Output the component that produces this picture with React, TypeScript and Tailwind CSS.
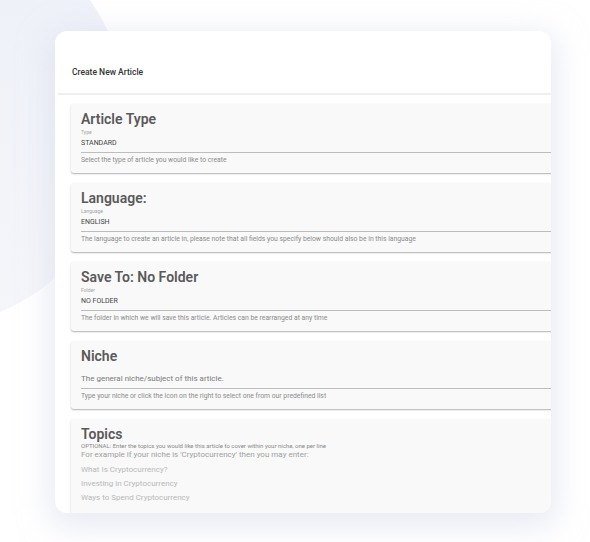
import React from 'react';

const SelectPanel: React.FC<{ title: string; label: string; value: string; helper: string }> = ({ title, label, value, helper }) => (
  <div className="rounded-[3px] bg-[#f9f9f9] px-[10px] pt-[6px] pb-[6px] shadow-[0_1px_2px_rgba(0,0,0,0.22),0_1px_1px_rgba(0,0,0,0.1)]">
    <h2 className="text-[14px] leading-[18px] font-semibold text-[#5a5a5a]">{title}</h2>
    <div className="text-[5px] leading-[8px] text-[#a5a5a5]">{label}</div>
    <div className="mt-[2px] border-b border-[#bdbdbd] pb-[4px] text-[7px] leading-[10px] text-[#444]">{value}</div>
    <p className="text-[6.8px] leading-[14px] text-[#8a8a8a]">{helper}</p>
  </div>
);

export default function App() {
  return (
    <div className="relative h-[542px] w-[590px] overflow-hidden bg-white font-['Roboto','Liberation_Sans',sans-serif]">
      <div className="absolute left-[-288px] top-[-88px] h-[416px] w-[416px] rounded-full bg-gradient-to-b from-[#edf0f8] to-[#f5f6fa]" />
      <div className="relative pl-[55px] pt-[31px]">
        <div className="h-[482px] w-[496px] overflow-hidden rounded-[12px] bg-white shadow-[0_8px_30px_6px_rgba(214,219,233,0.55)]">
          <div className="ml-[3px] h-[64px] border-b-2 border-[#efefef] pl-[14px] pt-[35px]">
            <div className="text-[8.5px] leading-[12px] font-medium text-[#333]">Create New Article</div>
          </div>
          <div className="flex w-[520px] flex-col gap-[10px] pl-[16px] pt-[9px]">
            <SelectPanel
              title="Article Type"
              label="Type"
              value="STANDARD"
              helper="Select the type of article you would like to create"
            />
            <SelectPanel
              title="Language:"
              label="Language"
              value="ENGLISH"
              helper="The language to create an article in, please note that all fields you specify below should also be in this language"
            />
            <SelectPanel
              title="Save To: No Folder"
              label="Folder"
              value="NO FOLDER"
              helper="The folder in which we will save this article. Articles can be rearranged at any time"
            />
            <div className="rounded-[3px] bg-[#f9f9f9] px-[10px] pt-[6px] pb-[6px] shadow-[0_1px_2px_rgba(0,0,0,0.22),0_1px_1px_rgba(0,0,0,0.1)]">
              <h2 className="text-[14px] leading-[18px] font-semibold text-[#5a5a5a]">Niche</h2>
              <div className="mt-[8px] border-b border-[#bdbdbd] pb-[3px] text-[8px] leading-[12px] text-[#7a7a7a]">
                The general niche/subject of this article.
              </div>
              <p className="text-[6.8px] leading-[14px] text-[#8a8a8a]">
                Type your niche or click the icon on the right to select one from our predefined list
              </p>
            </div>
            <div className="rounded-[3px] bg-[#f9f9f9] px-[10px] pt-[6px] pb-[10px] shadow-[0_1px_2px_rgba(0,0,0,0.22),0_1px_1px_rgba(0,0,0,0.1)]">
              <h2 className="text-[14px] leading-[18px] font-semibold text-[#5a5a5a]">Topics</h2>
              <div className="text-[6px] leading-[6px] text-[#888]">
                OPTIONAL: Enter the topics you would like this article to cover within your niche, one per line
              </div>
              <div className="text-[8px] leading-[12px] text-[#a0a0a0]">
                For example if your niche is 'Cryptocurrency' then you may enter:
              </div>
              <div className="mt-[2px] flex flex-col text-[8px] leading-[14px] text-[#b8b8b8]">
                <span>What Is Cryptocurrency?</span>
                <span>Investing in Cryptocurrency</span>
                <span>Ways to Spend Cryptocurrency</span>
              </div>
            </div>
          </div>
        </div>
      </div>
    </div>
  );
}
